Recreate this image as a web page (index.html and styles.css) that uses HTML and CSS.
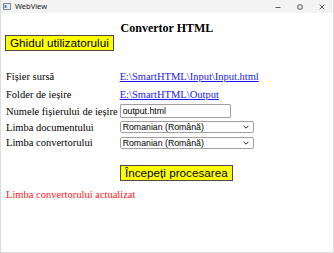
FILE: index.html
```html
<!DOCTYPE html>
<html lang="ro">
<head>
<meta charset="utf-8">
<link rel="stylesheet" href="styles.css">
</head>
<body>
<div class="window">
  <div class="titlebar">
    <div class="app">
      <svg class="appicon" width="8" height="7" viewBox="0 0 8 7"><rect x="0.5" y="0.5" width="7" height="6" fill="#e8eef4" stroke="#7a8a99"/><rect x="1.5" y="2" width="2" height="3" fill="#3a8fd0"/></svg>
      <span class="title">WebView</span>
    </div>
    <div class="controls">
      <span class="ctl"><svg width="6" height="6" viewBox="0 0 6 6"><path d="M0.5 3.5h5" stroke="#333" stroke-width="0.8"/></svg></span>
      <span class="ctl"><svg width="6" height="6" viewBox="0 0 6 6"><rect x="0.9" y="0.9" width="4.2" height="4.2" rx="0.6" fill="none" stroke="#333" stroke-width="0.8"/></svg></span>
      <span class="ctl"><svg width="6" height="6" viewBox="0 0 6 6"><path d="M0.7 0.7L5.3 5.3M5.3 0.7L0.7 5.3" stroke="#333" stroke-width="0.8"/></svg></span>
    </div>
  </div>
  <div class="content">
    <h1 class="heading">Convertor HTML</h1>
    <div class="btnrow"><button class="ybtn">Ghidul utilizatorului</button></div>
    <table class="form">
      <tr class="r-link"><td class="lbl">Fișier sursă</td><td><a href="#" class="link">E:\SmartHTML\Input\Input.html</a></td></tr>
      <tr class="r-link"><td class="lbl">Folder de ieșire</td><td><a href="#" class="link">E:\SmartHTML\Output</a></td></tr>
      <tr class="r-ctl"><td class="lbl">Numele fișierului de ieșire</td><td><input class="txt" type="text" value="output.html"></td></tr>
      <tr class="r-ctl"><td class="lbl">Limba documentului</td><td><span class="selwrap"><select class="sel"><option>Romanian (Română)</option></select><svg class="chev" width="6" height="4" viewBox="0 0 6 4"><path d="M0.6 0.8L3 3.2L5.4 0.8" fill="none" stroke="#222" stroke-width="1"/></svg></span></td></tr>
      <tr class="r-last"><td class="lbl">Limba convertorului</td><td><span class="selwrap"><select class="sel"><option>Romanian (Română)</option></select><svg class="chev" width="6" height="4" viewBox="0 0 6 4"><path d="M0.6 0.8L3 3.2L5.4 0.8" fill="none" stroke="#222" stroke-width="1"/></svg></span></td></tr>
    </table>
    <div class="btnrow actions"><button class="ybtn">Începeți procesarea</button></div>
    <div class="status">Limba convertorului actualizat</div>
  </div>
</div>
</body>
</html>
```
FILE: styles.css
```css
html, body { margin: 0; padding: 0; }
body { width: 334px; height: 253px; overflow: hidden; background: #fff; }
.window { display: flex; flex-direction: column; height: 253px; box-sizing: border-box; border-left: 1px solid #dcdcdc; border-right: 1px solid #dcdcdc; border-bottom: 1px solid #dcdcdc; }
.titlebar { height: 13px; flex: none; background: #f3f3f3; display: flex; align-items: center; justify-content: space-between; font-family: "Noto Sans", sans-serif; font-size: 7.5px; color: #222; }
.app { display: flex; align-items: center; gap: 4px; padding-left: 2px; }
.appicon { display: block; }
.title { line-height: 13px; }
.controls { display: flex; }
.ctl { width: 22px; height: 13px; display: flex; align-items: center; justify-content: center; }
.ctl svg { display: block; }
.content { flex: 1; padding: 0 4px; font-family: "Liberation Serif", "Times New Roman", serif; font-size: 10.5px; color: #000; }
.heading { margin: 8px 0 0; text-align: center; font-size: 12px; font-weight: bold; line-height: 14px; }
.btnrow { display: flex; }
.ybtn { background: #ffff00; border: 1px solid #4a4a4a; font-family: "Liberation Sans", Arial, sans-serif; font-size: 11.7px; color: #000; padding: 0 4px; margin: 0; height: 16px; line-height: 14px; white-space: nowrap; }
.form { border-collapse: collapse; margin-top: 16px; }
.form td { padding: 0; vertical-align: middle; white-space: nowrap; }
.form .lbl { padding: 0 2px 0 1px; }
.r-link td { height: 18px; }
.r-ctl td { height: 16px; }
.r-last td { height: 15px; }
.link { color: #1a1aee; text-decoration: underline; }
.txt { display: block; width: 111px; height: 14px; box-sizing: border-box; font-family: "Liberation Sans", Arial, sans-serif; font-size: 8.75px; color: #000; border: 1px solid #a0a0a0; border-radius: 1px; padding: 0 2px; margin: 0; }
.selwrap { position: relative; display: block; width: 134px; }
.sel { display: block; width: 134px; height: 12px; box-sizing: border-box; appearance: none; -webkit-appearance: none; font-family: "Liberation Sans", Arial, sans-serif; font-size: 8.75px; line-height: 10px; color: #000; border: 1px solid #a0a0a0; border-radius: 2px; padding: 0 2px; margin: 0; background: #fff; }
.chev { position: absolute; right: 5px; top: 4px; pointer-events: none; }
.actions { padding-left: 115px; margin-top: 15px; }
.status { color: #ff1a1a; margin-top: 8px; padding-left: 1px; line-height: 12px; }
```
